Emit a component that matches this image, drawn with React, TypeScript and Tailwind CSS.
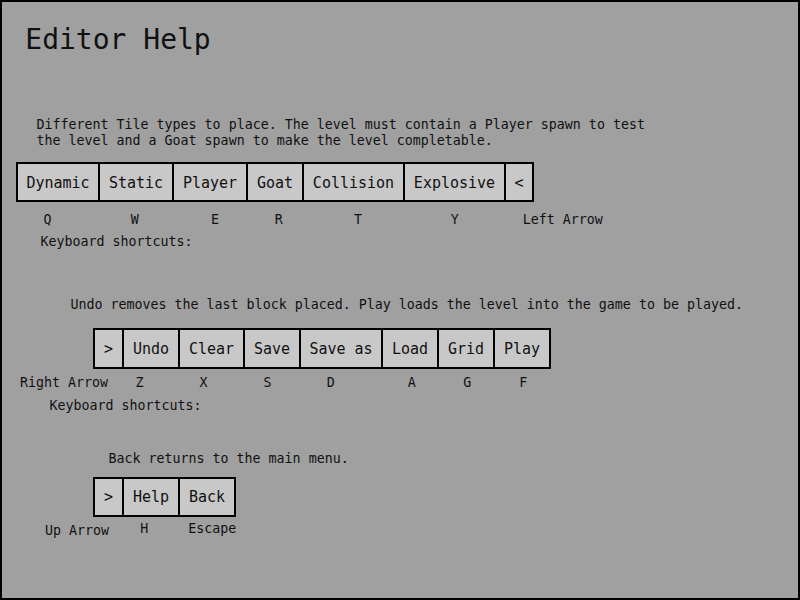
import React from "react";

type Btn = { label: string; w: string };

function ButtonRow({ items, className }: { items: Btn[]; className: string }) {
  return (
    <div className={"flex " + className}>
      {items.map((b, i) => (
        <div
          key={b.label}
          className={
            "flex items-center justify-center bg-[#c8c8c8] border-black border-l-2 border-y-2 text-[15px] shrink-0 " +
            b.w +
            (i === items.length - 1 ? " border-r-2" : "")
          }
        >
          <span className="pt-[1px]">{b.label}</span>
        </div>
      ))}
    </div>
  );
}

export default function App() {
  const row1: Btn[] = [
    { label: "Dynamic", w: "w-[82px]" },
    { label: "Static", w: "w-[74px]" },
    { label: "Player", w: "w-[74px]" },
    { label: "Goat", w: "w-[56px]" },
    { label: "Collision", w: "w-[101px]" },
    { label: "Explosive", w: "w-[101px]" },
    { label: "<", w: "w-[30px]" },
  ];
  const row2: Btn[] = [
    { label: ">", w: "w-[29px]" },
    { label: "Undo", w: "w-[56px]" },
    { label: "Clear", w: "w-[65px]" },
    { label: "Save", w: "w-[56px]" },
    { label: "Save as", w: "w-[82px]" },
    { label: "Load", w: "w-[56px]" },
    { label: "Grid", w: "w-[56px]" },
    { label: "Play", w: "w-[58px]" },
  ];
  const row3: Btn[] = [
    { label: ">", w: "w-[29px]" },
    { label: "Help", w: "w-[56px]" },
    { label: "Back", w: "w-[58px]" },
  ];

  return (
    <div className="w-[800px] h-[600px] border-2 border-black bg-[#a0a0a0] text-[#111] font-['DejaVu_Sans_Mono',monospace] overflow-hidden">
      <div className="flex flex-col text-[13.3px] leading-[16px]">
        <div className="mt-[22px] ml-[23.3px] text-[28px] leading-[32px]">Editor Help</div>

        <div className="mt-[61px] ml-[34.5px] whitespace-pre">
          {"Different Tile types to place. The level must contain a Player spawn to test\nthe level and a Goat spawn to make the level completable."}
        </div>

        <ButtonRow items={row1} className="mt-[13px] ml-[14px] h-[40px]" />

        <div className="flex mt-[10.3px] whitespace-pre">
          <span className="ml-[35.5px] w-[20px] text-center">Q</span>
          <span className="ml-[67.2px] w-[20px] text-center">W</span>
          <span className="ml-[60.3px] w-[20px] text-center">E</span>
          <span className="ml-[43.8px] w-[20px] text-center">R</span>
          <span className="ml-[59.2px] w-[20px] text-center">T</span>
          <span className="ml-[76.7px] w-[20px] text-center">Y</span>
          <span className="ml-[58px]">Left Arrow</span>
        </div>

        <div className="mt-[6.2px] ml-[38.5px]">Keyboard shortcuts:</div>

        <div className="mt-[46.5px] ml-[68.5px]">
          Undo removes the last block placed. Play loads the level into the game to be played.
        </div>

        <ButtonRow items={row2} className="mt-[15px] ml-[91px] h-[41px]" />

        <div className="flex mt-[6.3px] whitespace-pre">
          <span className="ml-[18px] w-[89.4px]">Right Arrow</span>
          <span className="ml-[20px] w-[20px] text-center">Z</span>
          <span className="ml-[44px] w-[20px] text-center">X</span>
          <span className="ml-[44.2px] w-[20px] text-center">S</span>
          <span className="ml-[43.3px] w-[20px] text-center">D</span>
          <span className="ml-[60.9px] w-[20px] text-center">A</span>
          <span className="ml-[35.5px] w-[20px] text-center">G</span>
          <span className="ml-[36px] w-[20px] text-center">F</span>
        </div>

        <div className="mt-[6.3px] ml-[47.5px]">Keyboard shortcuts:</div>

        <div className="mt-[37.4px] ml-[106.5px]">Back returns to the main menu.</div>

        <ButtonRow items={row3} className="mt-[10px] ml-[91px] h-[40px]" />

        <div className="flex items-start mt-[3.6px] whitespace-pre">
          <span className="ml-[43px] w-[65px] mt-[2px]">Up Arrow</span>
          <span className="ml-[24.2px] w-[20px] text-center">H</span>
          <span className="ml-[34px]">Escape</span>
        </div>
      </div>
    </div>
  );
}
